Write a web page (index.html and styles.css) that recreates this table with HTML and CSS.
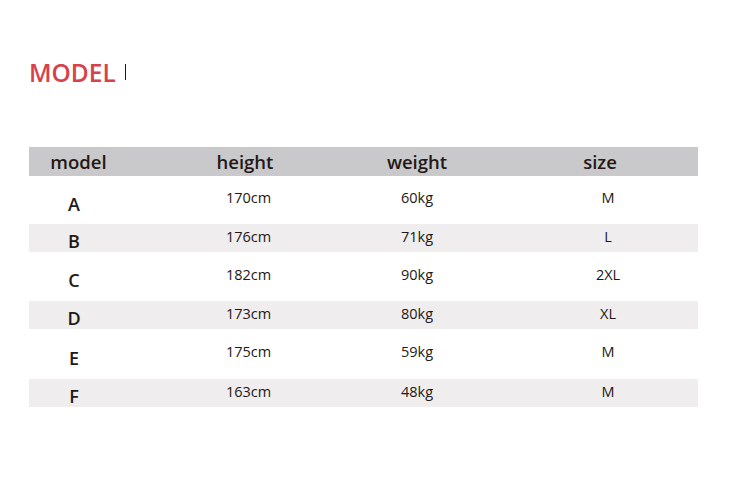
FILE: index.html
```html
<!DOCTYPE html>
<html>
<head>
<meta charset="utf-8">
<link rel="stylesheet" href="styles.css">
</head>
<body>
<div class="page">
  <div class="title-row">
    <h1 class="title">MODEL</h1>
    <span class="title-bar"></span>
  </div>
  <div class="table">
    <div class="row head">
      <div class="c1">model</div>
      <div class="c2">height</div>
      <div class="c3">weight</div>
      <div class="c4">size</div>
    </div>
    <div class="row white first">
      <div class="c1 letter">A</div>
      <div class="c2 data">170cm</div>
      <div class="c3 data">60kg</div>
      <div class="c4 data">M</div>
    </div>
    <div class="row gray">
      <div class="c1 letter">B</div>
      <div class="c2 data">176cm</div>
      <div class="c3 data">71kg</div>
      <div class="c4 data">L</div>
    </div>
    <div class="row white">
      <div class="c1 letter">C</div>
      <div class="c2 data">182cm</div>
      <div class="c3 data">90kg</div>
      <div class="c4 data">2XL</div>
    </div>
    <div class="row gray">
      <div class="c1 letter">D</div>
      <div class="c2 data">173cm</div>
      <div class="c3 data">80kg</div>
      <div class="c4 data">XL</div>
    </div>
    <div class="row white tall">
      <div class="c1 letter">E</div>
      <div class="c2 data">175cm</div>
      <div class="c3 data">59kg</div>
      <div class="c4 data">M</div>
    </div>
    <div class="row gray">
      <div class="c1 letter">F</div>
      <div class="c2 data">163cm</div>
      <div class="c3 data">48kg</div>
      <div class="c4 data">M</div>
    </div>
  </div>
</div>
</body>
</html>
```
FILE: styles.css
```css
html, body {
  margin: 0;
  padding: 0;
  background: #ffffff;
}
body {
  font-family: "Open Sans", "Liberation Sans", sans-serif;
  color: #231815;
}
.page {
  width: 750px;
  height: 500px;
  padding: 0 0 0 29px;
  box-sizing: border-box;
}
.title-row {
  display: flex;
  align-items: center;
  gap: 9px;
  padding-top: 56px;
  height: 33px;
}
.title {
  margin: 0;
  font-size: 24.5px;
  line-height: 33px;
  font-weight: 600;
  color: #d8404a;
  letter-spacing: 0;
}
.title-bar {
  width: 1px;
  height: 16px;
  background: #231815;
  margin-top: -2px;
}
.table {
  margin-top: 58px;
  width: 669px;
}
.row {
  display: grid;
  grid-template-columns: 99px 234px 110px 1fr;
  align-items: center;
  text-align: center;
}
.head {
  height: 29px;
  background: #c9c8ca;
  font-size: 18.5px;
  font-weight: 600;
  line-height: 24px;
}
.head .c4 {
  padding-left: 30px;
}
.white {
  height: 49px;
}
.white.first {
  height: 48px;
}
.white.tall {
  height: 50px;
}
.gray {
  height: 28px;
  background: #efedee;
}
.letter {
  font-size: 18px;
  font-weight: 600;
  line-height: 20px;
  padding-top: 7px;
  padding-right: 9px;
}
.gray .letter {
  padding-top: 5px;
}
.data {
  font-size: 14.5px;
  line-height: 18px;
  padding-bottom: 4px;
}
.gray .data {
  padding-bottom: 3px;
}
.c2.data {
  padding-left: 7px;
}
.c4.data {
  padding-left: 46px;
}
```
